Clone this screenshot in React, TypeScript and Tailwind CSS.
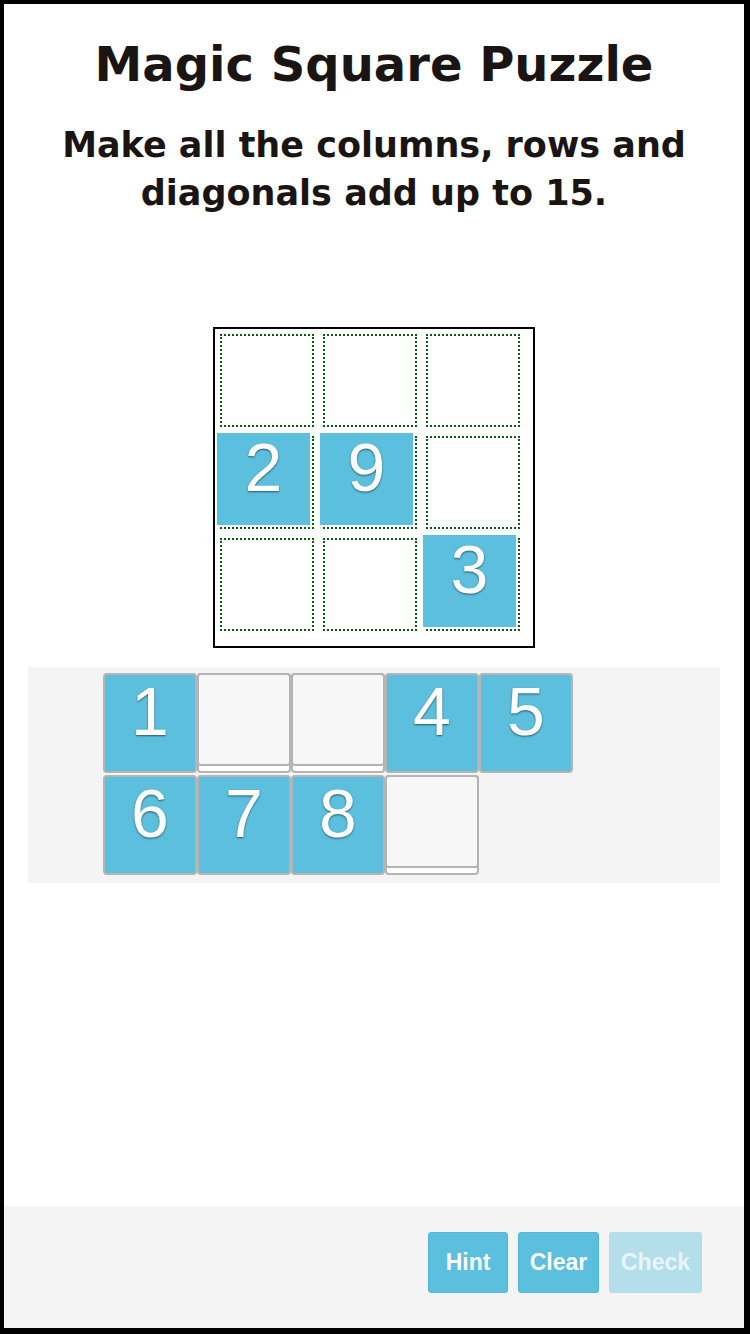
import React from 'react';

const board: (number | null)[] = [null, null, null, 2, 9, null, null, null, 3];
const tray: (number | null)[] = [1, null, null, 4, 5, 6, 7, 8, null];

function TrayTile({ value }: { value: number | null }) {
  if (value === null) {
    return (
      <div className="w-[94px] h-[100px] rounded-[4px] border-2 border-[#b4b4b4] bg-white flex flex-col">
        <div className="-mx-[2px] -mt-[2px] h-[93px] rounded-[4px] border-2 border-[#b4b4b4] bg-[#f7f7f7]" />
      </div>
    );
  }
  return (
    <div className="w-[94px] h-[100px] rounded-[4px] border-2 border-[#b4b4b4] bg-[#5bbfdd] flex justify-center">
      <span className="text-[68px] leading-[72px] text-white [text-shadow:0_1px_2px_rgba(0,0,0,0.55)] font-['Liberation_Sans',Arial,sans-serif]">
        {value}
      </span>
    </div>
  );
}

export default function App() {
  return (
    <div className="w-[750px] h-[1334px] bg-black pt-[4px] pl-[4px] pr-[6px] pb-[6px]">
      <div className="w-full h-full bg-white flex flex-col">
        {/* header */}
        <div className="pt-[30px] flex flex-col items-center text-[#1a1512] font-['DejaVu_Sans','Noto_Sans',sans-serif] font-bold">
          <h1 className="text-[48px] leading-[60px]">Magic Square Puzzle</h1>
          <p className="mt-[27px] text-[35px] leading-[48px] text-center">
            Make all the columns, rows and
            <br />
            diagonals add up to 15.
          </p>
        </div>

        {/* board */}
        <div className="mt-[110px] flex justify-center">
          <div className="border-2 border-black pl-[5px] pt-[5px] pr-[13px] pb-[15px] grid grid-cols-[94px_94px_94px] gap-[9px]">
            {board.map((v, i) => (
              <div key={i} className="relative w-[94px] h-[93px] border-2 border-dotted border-[#0b5c12]">
                {v !== null && (
                  <div className="absolute -left-[5px] -top-[5px] w-[93px] h-[92px] bg-[#5bbfdd] flex justify-center">
                    <span className="text-[68px] leading-[68px] text-white [text-shadow:0_1px_2px_rgba(0,0,0,0.55)] font-['Liberation_Sans',Arial,sans-serif]">
                      {v}
                    </span>
                  </div>
                )}
              </div>
            ))}
          </div>
        </div>

        {/* tray */}
        <div className="mt-[19px] mx-[24px] bg-[#f4f4f4] pl-[75px] pt-[6px] pb-[8px]">
          <div className="w-[470px] flex flex-wrap gap-y-[2px]">
            {tray.map((v, i) => (
              <TrayTile key={i} value={v} />
            ))}
          </div>
        </div>

        <div className="flex-1" />

        {/* bottom bar */}
        <div className="h-[122px] bg-[#f4f4f4] flex items-start justify-end pt-[26px] pr-[42px] gap-[10px] font-['Liberation_Sans',Arial,sans-serif] font-bold text-[23px]">
          <button className="h-[61px] w-[80px] rounded-[3px] bg-[#5bbfdd] border border-[#52b8d8] text-white">Hint</button>
          <button className="h-[61px] w-[81px] rounded-[3px] bg-[#5bbfdd] border border-[#52b8d8] text-white">Clear</button>
          <button className="h-[61px] w-[93px] rounded-[3px] bg-[#b5deeb] text-[#e9f5f9]">Check</button>
        </div>
      </div>
    </div>
  );
}
